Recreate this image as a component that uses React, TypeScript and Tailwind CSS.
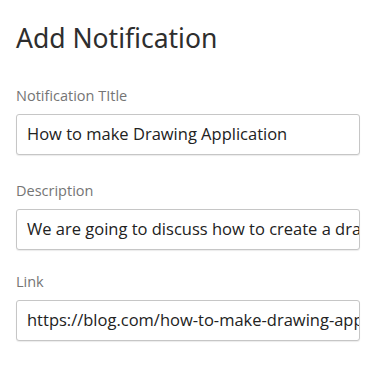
import React from "react";

function Field({ label, value, top }: { label: string; value: string; top: string }) {
  return (
    <div className={`flex flex-col gap-[8px] ${top}`}>
      <div className="text-[14.5px] leading-[20px] text-[#757575]">{label}</div>
      <div className="flex h-[41px] w-[344px] items-center overflow-hidden whitespace-nowrap rounded-[3px] border border-[#c6c6c6] bg-white pl-[10px] text-[16.5px] text-[#222] shadow-[0_1px_1px_rgba(0,0,0,0.08)]">
        {value}
      </div>
    </div>
  );
}

export default function App() {
  return (
    <div className="flex h-[377px] w-[377px] flex-col bg-white px-[16px] pt-[21px] font-['Open_Sans',sans-serif]">
      <h1 className="font-['Noto_Sans',sans-serif] text-[26.5px] font-normal leading-[34px] text-[#2e2e2e]">
        Add Notification
      </h1>
      <Field label="Notification TItle" value="How to make Drawing Application" top="mt-[31px]" />
      <Field label="Description" value="We are going to discuss how to create a drawing application" top="mt-[26px]" />
      <Field label="Link" value="https://blog.com/how-to-make-drawing-application" top="mt-[22px]" />
    </div>
  );
}
